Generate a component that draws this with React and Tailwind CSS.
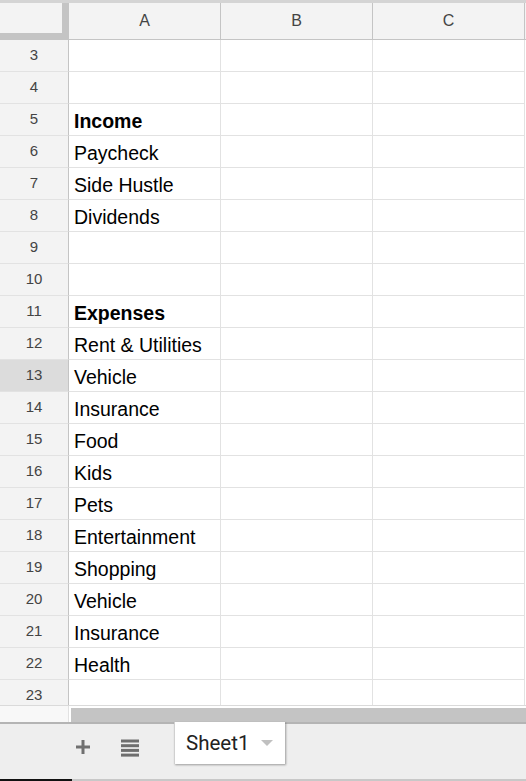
import React from "react";

const rows = [
  { n: 3, text: "" },
  { n: 4, text: "" },
  { n: 5, text: "Income", bold: true },
  { n: 6, text: "Paycheck" },
  { n: 7, text: "Side Hustle" },
  { n: 8, text: "Dividends" },
  { n: 9, text: "" },
  { n: 10, text: "" },
  { n: 11, text: "Expenses", bold: true },
  { n: 12, text: "Rent & Utilities" },
  { n: 13, text: "Vehicle", active: true },
  { n: 14, text: "Insurance" },
  { n: 15, text: "Food" },
  { n: 16, text: "Kids" },
  { n: 17, text: "Pets" },
  { n: 18, text: "Entertainment" },
  { n: 19, text: "Shopping" },
  { n: 20, text: "Vehicle" },
  { n: 21, text: "Insurance" },
  { n: 22, text: "Health" },
  { n: 23, text: "" },
];

const cols = ["A", "B", "C"];

function Row({ row }) {
  return (
    <div className="grid grid-cols-[69px_152px_152px_152px] grid-rows-[32px] h-[32px] shrink-0">
      <div
        className={`flex items-center justify-center border-r border-b border-r-[#c4c4c4] border-b-[#e2e2e2] text-[15px] text-[#444] ${
          row.active ? "bg-[#dcdcdc]" : "bg-[#f3f3f3]"
        }`}
      >
        {row.n}
      </div>
      <div
        className={`flex items-center pl-[5px] pt-[3px] border-r border-b border-[#e2e2e2] text-[19.5px] leading-[22px] text-black whitespace-nowrap ${
          row.bold ? "font-bold" : ""
        }`}
      >
        {row.text}
      </div>
      <div className="border-r border-b border-[#e2e2e2]" />
      <div className="border-r border-b border-[#e2e2e2]" />
    </div>
  );
}

export default function App() {
  return (
    <div className="w-[526px] h-[781px] overflow-hidden flex flex-col bg-white font-['Liberation_Sans',Arial,sans-serif]">
      {/* top edge */}
      <div className="h-[3px] bg-[#d4d4d4] shrink-0" />

      {/* column headers */}
      <div className="grid grid-cols-[69px_152px_152px_152px] h-[37px] shrink-0 bg-[#f3f3f3] border-b border-[#c4c4c4]">
        <div className="border-r-[7px] border-b-[6px] border-[#c4c4c4] bg-[#f3f3f3]" />
        {cols.map((c) => (
          <div
            key={c}
            className="flex items-center justify-center border-r border-[#c4c4c4] text-[16px] text-[#444]"
          >
            {c}
          </div>
        ))}
      </div>

      {/* grid body */}
      <div className="h-[665px] overflow-hidden flex flex-col shrink-0">
        {rows.map((r) => (
          <Row key={r.n} row={r} />
        ))}
      </div>

      {/* horizontal scrollbar */}
      <div className="h-[17px] shrink-0 flex border-t border-[#dadada]">
        <div className="w-[69px] bg-[#f8f8f8] border-r border-[#e2e2e2]" />
        <div className="flex-1 bg-white pl-[2px] pt-[2px]">
          <div className="h-[14px] bg-[#c4c4c4]" />
        </div>
      </div>
      <div className="h-[2px] bg-[#b4b4b4] shrink-0" />

      {/* sheet tabs bar */}
      <div className="h-[55px] shrink-0 bg-[#eeeeee] flex items-start">
        <button className="ml-[75px] mt-[15px] w-[16px] h-[16px] flex items-center justify-center">
          <svg width="16" height="16" viewBox="0 0 16 16">
            <path d="M8 1v14M1 8h14" stroke="#707070" strokeWidth="3" />
          </svg>
        </button>
        <button className="ml-[30px] mt-[15px] w-[18px] h-[18px]">
          <svg width="18" height="18" viewBox="0 0 18 18">
            <rect x="0" y="0.5" width="18" height="3" fill="#6e6e6e" />
            <rect x="0" y="5.2" width="18" height="3" fill="#6e6e6e" />
            <rect x="0" y="9.9" width="18" height="3" fill="#6e6e6e" />
            <rect x="0" y="14.6" width="18" height="3" fill="#6e6e6e" />
          </svg>
        </button>
        <div className="-mt-[2px] ml-[35px] w-[111px] h-[42px] bg-white border-l border-[#d0d0d0] shadow-[1px_1px_2px_rgba(0,0,0,0.35)] flex items-center pl-[11px] pt-[1px]">
          <span className="font-['Roboto',sans-serif] text-[20.5px] text-[#222]">Sheet1</span>
          <svg className="ml-[12px]" width="12" height="7" viewBox="0 0 12 7">
            <path d="M0 0h12L6 6z" fill="#c0c0c0" />
          </svg>
        </div>
      </div>

      {/* bottom strip */}
      <div className="h-[2px] shrink-0 flex">
        <div className="w-[72px] bg-[#111]" />
        <div className="flex-1 bg-[#c8c8c8]" />
      </div>
    </div>
  );
}
